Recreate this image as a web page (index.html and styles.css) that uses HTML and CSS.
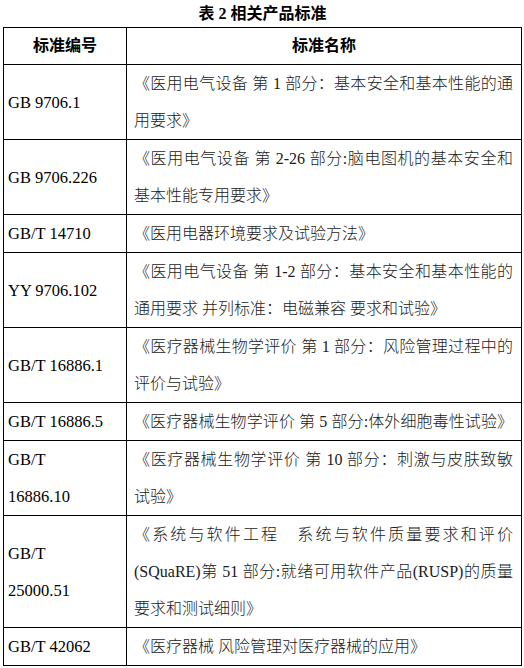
FILE: index.html
```html
<!DOCTYPE html>
<html lang="zh-CN">
<head>
<meta charset="utf-8">
<title>表 2 相关产品标准</title>
<link rel="stylesheet" href="styles.css">
</head>
<body>
<div class="page">
  <p class="caption">表 2 相关产品标准</p>
  <table class="std">
    <thead>
      <tr><th class="c1">标准编号</th><th class="c2">标准名称</th></tr>
    </thead>
    <tbody>
      <tr>
        <td class="code">GB 9706.1</td>
        <td class="name"><span class="ln">《医用电气设备 第 1 部分：基本安全和基本性能的通</span><span class="ln last">用要求》</span></td>
      </tr>
      <tr>
        <td class="code">GB 9706.226</td>
        <td class="name"><span class="ln">《医用电气设备 第 2-26 部分:脑电图机的基本安全和</span><span class="ln last">基本性能专用要求》</span></td>
      </tr>
      <tr>
        <td class="code">GB/T 14710</td>
        <td class="name"><span class="ln last">《医用电器环境要求及试验方法》</span></td>
      </tr>
      <tr>
        <td class="code">YY 9706.102</td>
        <td class="name"><span class="ln">《医用电气设备 第 1-2 部分：基本安全和基本性能的</span><span class="ln last">通用要求 并列标准：电磁兼容 要求和试验》</span></td>
      </tr>
      <tr>
        <td class="code">GB/T 16886.1</td>
        <td class="name"><span class="ln">《医疗器械生物学评价 第 1 部分：风险管理过程中的</span><span class="ln last">评价与试验》</span></td>
      </tr>
      <tr>
        <td class="code">GB/T 16886.5</td>
        <td class="name"><span class="ln">《医疗器械生物学评价 第 5 部分:体外细胞毒性试验》</span></td>
      </tr>
      <tr>
        <td class="code">GB/T<br>16886.10</td>
        <td class="name"><span class="ln">《医疗器械生物学评价 第 10 部分：刺激与皮肤致敏</span><span class="ln last">试验》</span></td>
      </tr>
      <tr>
        <td class="code">GB/T<br>25000.51</td>
        <td class="name"><span class="ln">《系统与软件工程　系统与软件质量要求和评价</span><span class="ln">(SQuaRE)第 51 部分:就绪可用软件产品(RUSP)的质量</span><span class="ln last">要求和测试细则》</span></td>
      </tr>
      <tr>
        <td class="code">GB/T 42062</td>
        <td class="name"><span class="ln last">《医疗器械 风险管理对医疗器械的应用》</span></td>
      </tr>
    </tbody>
  </table>
</div>
</body>
</html>
```

FILE: styles.css
```css
html, body {
  margin: 0;
  padding: 0;
  background: #fff;
}

body {
  font-family: "Liberation Serif", "Noto Sans CJK SC", serif;
  font-size: 16px;
  color: #111;
}

.page {
  padding: 0 3px;
  width: 519px;
}

.caption {
  margin: 0;
  height: 27px;
  line-height: 28px;
  text-align: center;
  font-weight: bold;
  font-size: 16px;
  color: #000;
}

.std {
  width: 519px;
  border-collapse: collapse;
  table-layout: fixed;
}

.std th,
.std td {
  border: 1px solid #000;
  padding: 0 7px;
  line-height: 37px;
  vertical-align: middle;
}

.std th {
  height: 36px;
  line-height: 36px;
  font-weight: bold;
  text-align: center;
  color: #000;
}

.std .c1 {
  width: 114px;
  padding: 0 4px;
}

.std .code {
  padding: 0 4px;
  text-align: left;
  font-size: 16.5px;
  color: #000;
}

.std .name {
  padding: 0 8px 0 7px;
  font-weight: 300;
  color: #1a1a1a;
}

.ln {
  display: block;
  white-space: nowrap;
  text-align: justify;
  text-align-last: justify;
}

.ln.last {
  text-align-last: left;
}
```
